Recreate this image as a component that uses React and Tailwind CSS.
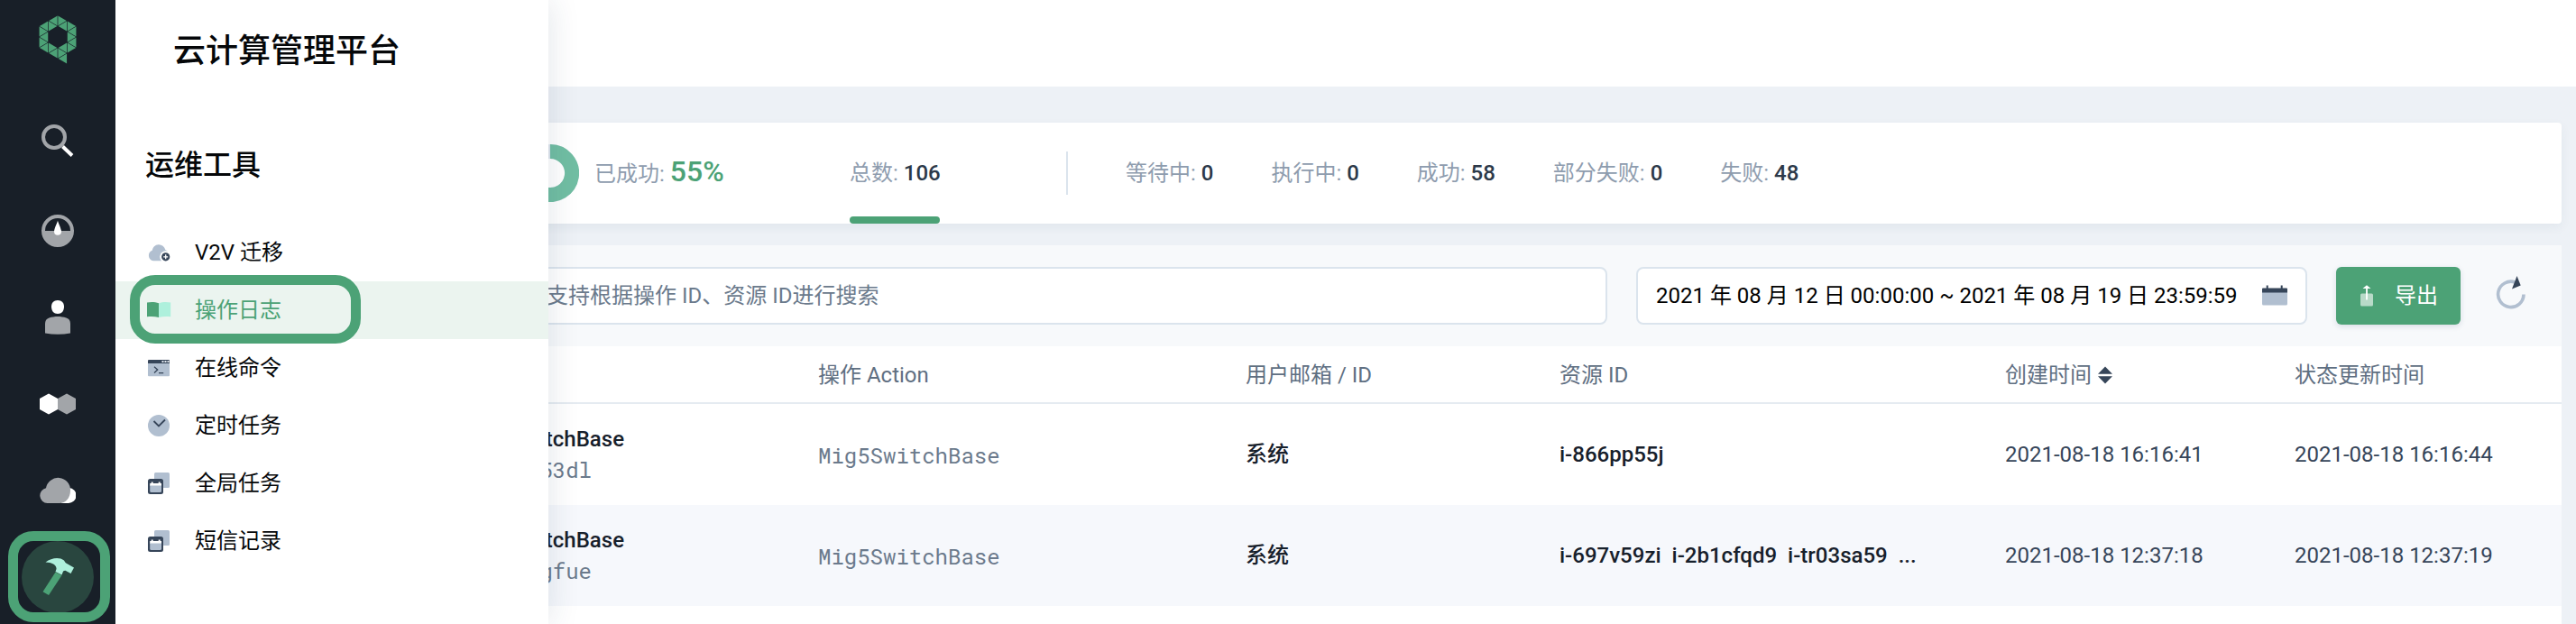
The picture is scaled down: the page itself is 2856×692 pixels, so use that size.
const LOGO_TRIANGLES = (() => {
  const tris = [];
  const w = 10.4;
  const left = [
    [[-2, -12], [-1, -18], [-1, -6]],
    [[-2, -12], [-2, 0], [-1, -6]],
    [[-2, 0], [-1, -6], [-1, 6]],
    [[-2, 0], [-2, 12], [-1, 6]],
    [[-2, 12], [-1, 6], [-1, 18]],
    [[-1, -18], [-1, -6], [0, -12]],
    [[-1, -18], [0, -24], [0, -12]],
    [[-1, 18], [-1, 6], [0, 12]],
    [[-1, 18], [0, 24], [0, 12]],
  ];
  const all = [...left, ...left.map((t) => t.map(([x, y]) => [-x, y])), [[0, 24], [1, 18], [1, 30]]];
  for (const t of all) {
    const pts = t.map(([x, y]) => [x * w + 22, y + 25]);
    const cx = (pts[0][0] + pts[1][0] + pts[2][0]) / 3;
    const cy = (pts[0][1] + pts[1][1] + pts[2][1]) / 3;
    tris.push(pts.map(([x, y]) => `${(cx + (x - cx) * 0.9).toFixed(2)},${(cy + (y - cy) * 0.9).toFixed(2)}`).join(" "));
  }
  return tris;
})();

function Logo() {
  return (
    <svg width="44" height="56" viewBox="0 0 44 56" fill="#4ca276">
      {LOGO_TRIANGLES.map((p) => (
        <polygon key={p} points={p} />
      ))}
    </svg>
  );
}

function SearchIcon() {
  return (
    <svg width="40" height="40" viewBox="0 0 40 40" fill="none">
      <circle cx="16" cy="16" r="12" stroke="#a2a5a9" strokeWidth="4" />
      <path d="M25.5 26.5 36 36.5" stroke="#fff" strokeWidth="4" />
    </svg>
  );
}

function GaugeIcon() {
  return (
    <svg width="40" height="40" viewBox="0 0 40 40" fill="none">
      <circle cx="20" cy="20" r="16" stroke="#a2a5a9" strokeWidth="4" />
      <path d="M4 20h32a16 16 0 0 1-32 0z" fill="#a2a5a9" />
      <path d="M20 8.500c.6 3 4 9 4 12.300a4 4 0 0 1-8 0C16 17.500 19.400 11.500 20 8.500z" fill="#fff" />
    </svg>
  );
}

function UserIcon() {
  return (
    <svg width="40" height="40" viewBox="0 0 40 40" fill="none">
      <path d="M20 1c4.500 0 7.200 3 7 7.500C26.800 13 24.500 16 20 16s-6.800-3-7-7.500C12.800 4 15.500 1 20 1z" fill="#fff" />
      <path d="M6 37.500V27c0-3.500 1.500-5.500 4.500-6.500 6-2 13-2 19 0 3 1 4.500 3 4.500 6.500v10.500c-9 1.700-19 1.700-28 0z" fill="#a2a5a9" />
    </svg>
  );
}

function HexIcon() {
  return (
    <svg width="40" height="40" viewBox="0 0 40 40">
      <path d="M10 8.500 20 14v12l-10 5.500L0 26V14z" fill="#fff" />
      <path d="M30 8.500 40 14v12l-10 5.500L20 26V14z" fill="#a2a5a9" />
    </svg>
  );
}

function CloudIcon() {
  return (
    <svg width="40" height="40" viewBox="0 0 40 40">
      <path d="M24 34V17h8.500a8.500 8.500 0 0 1-1 17z" fill="#fff" />
      <path d="M8.500 34A8.500 8.500 0 0 1 7 17.200 13.600 13.600 0 0 1 34 20c0 8-5 14-12 14z" fill="#a2a5a9" />
    </svg>
  );
}

function HammerIcon() {
  return (
    <svg width="40" height="44" viewBox="0 0 40 44">
      <path d="m17.500 16.500 7 3.500L10 42l-6.500-3.700z" fill="#4ca276" />
      <path d="M6.500 5.500C13 .5 22-.5 27 3.500c1 2 2 3 4 4L38 11.500l-3.500 6.500-5.500-3c-2-.5-3 .5-3.500 2l-1 2.500-7-3.500 1-3C19 9 14 5.500 6.500 5.500z" fill="#aef0dc" />
    </svg>
  );
}

function CloudPlusIcon() {
  return (
    <svg width="28" height="28" viewBox="0 0 28 28">
      <path d="M8 23.300a6 6 0 0 1-1.300-11.500A7.400 7.400 0 0 1 21.300 11a6.300 6.300 0 0 1 3.700 6v6.300z" fill="#b1bfd0" />
      <circle cx="21.700" cy="18.800" r="6.500" fill="#fff" />
      <circle cx="21.700" cy="18.800" r="4.600" fill="#364559" />
      <path d="M21.700 16.300v5M19.200 18.800h5" stroke="#fff" strokeWidth="1.300" />
    </svg>
  );
}

function BookIcon() {
  return (
    <svg width="28" height="28" viewBox="0 0 28 28">
      <path d="M1 5.500c4-1 9-.8 13 .7V22c-4-1.200-9-1.400-13-.7z" fill="#4ca276" />
      <path d="M14 6.200c4-1.500 9-1.700 13.200-.7v15.800c-4.200-.7-9.200-.5-13.200.7z" fill="#aef0dc" />
    </svg>
  );
}

function TerminalIcon() {
  return (
    <svg width="28" height="28" viewBox="0 0 28 28" fill="none">
      <path d="M2 8h24v14.200a1 1 0 0 1-1 1H3a1 1 0 0 1-1-1z" fill="#b1bfd0" />
      <path d="M3 5h22a1 1 0 0 1 1 1v3H2V6a1 1 0 0 1 1-1z" fill="#364559" />
      <path d="M17.500 7h2M20.500 7h2M23.500 7h2" stroke="#dfe6ee" strokeWidth="2" />
      <path d="m9 12.700 3.700 3.300L9 19.500M14 19.700h5.200" stroke="#364559" strokeWidth="1.300" />
    </svg>
  );
}

function ClockIcon() {
  return (
    <svg width="28" height="28" viewBox="0 0 28 28" fill="none">
      <circle cx="14" cy="14" r="12" fill="#b1bfd0" />
      <path d="m8.500 9 5.500 5.500L21 7.500" stroke="#364559" strokeWidth="1.800" />
    </svg>
  );
}

function TaskStackIcon() {
  return (
    <svg width="28" height="28" viewBox="0 0 28 28">
      <rect x="9" y="2" width="17" height="17" rx="1.500" fill="#b1bfd0" />
      <rect x="2" y="9" width="17" height="17" rx="2.500" fill="#364559" />
      <path d="M4.200 14h1.500v-1.500h2V14h6v-1.500h2V14h1.300v3H4.200z" fill="#fff" />
      <path d="M4.200 16.500H17v6a1.500 1.500 0 0 1-1.500 1.500h-9.800a1.500 1.500 0 0 1-1.500-1.500z" fill="#b1bfd0" />
    </svg>
  );
}

function CalendarIcon() {
  return (
    <svg width="28" height="24" viewBox="0 0 28 24">
      <path d="M0 8h28v13a1.500 1.500 0 0 1-1.500 1.500h-25A1.500 1.500 0 0 1 0 21z" fill="#b1bfd0" />
      <path d="M4.700.500h2v3h14v-3h2v3H27a1 1 0 0 1 1 1v4H0v-4a1 1 0 0 1 1-1h3.700z" fill="#364559" />
    </svg>
  );
}

function ExportIcon() {
  return (
    <svg width="14" height="24" viewBox="0 0 14 24" fill="none">
      <rect x="0" y="9.500" width="14" height="14" rx="1.500" fill="#b8dac8" />
      <path d="M6.100 16.500V4H2.500L7 .3 11.500 4H7.900v12.500z" fill="#fff" />
    </svg>
  );
}

function RefreshIcon() {
  return (
    <svg width="36" height="40" viewBox="0 0 36 40" fill="none">
      <path d="M22.500 8A14.200 14.200 0 1 0 32 21.500" stroke="#b1bfd0" strokeWidth="3.600" />
      <path d="m24.500 1 4.200 10.500L19 15.500z" fill="#364559" />
    </svg>
  );
}

const RAIL_ICONS = [
  { name: "search", Icon: SearchIcon, cls: "mt-16 h-[40px]" },
  { name: "gauge", Icon: GaugeIcon, cls: "mt-[60px] h-[40px]" },
  { name: "user", Icon: UserIcon, cls: "mt-[56px] h-[40px]" },
  { name: "hex", Icon: HexIcon, cls: "mt-[56px] h-[40px]" },
  { name: "cloud", Icon: CloudIcon, cls: "mt-[56px] h-[40px]" },
];

function Rail() {
  return (
    <nav className="relative z-20 flex h-full w-32 shrink-0 flex-col items-center bg-[#181f28] pt-4">
      <Logo />
      {RAIL_ICONS.map(({ name, Icon, cls }) => (
        <div key={name} className={cls}>
          <Icon />
        </div>
      ))}
      <div className="mt-9 flex size-20 shrink-0 items-center justify-center rounded-full bg-[#29463f]">
        <HammerIcon />
      </div>
      <div className="absolute top-[589px] left-[9px] h-[101px] w-[113px] rounded-[28px] border-[11px] border-[#4ca276]" />
    </nav>
  );
}

const MENU = [
  { label: "V2V 迁移", Icon: CloudPlusIcon },
  { label: "操作日志", Icon: BookIcon, active: true },
  { label: "在线命令", Icon: TerminalIcon },
  { label: "定时任务", Icon: ClockIcon },
  { label: "全局任务", Icon: TaskStackIcon },
  { label: "短信记录", Icon: TaskStackIcon },
];

function Drawer() {
  return (
    <aside className="relative z-10 h-full w-[480px] shrink-0 bg-white text-[#050709] shadow-[2px_0_32px_rgba(30,60,90,0.12)]">
      <h1 className="pt-8 pl-16 text-[36px] leading-[50px] font-medium">云计算管理平台</h1>
      <h2 className="mt-[77px] pl-[33px] text-[32px] leading-[48px] font-medium">运维工具</h2>
      <ul className="mt-[41px]">
        {MENU.map(({ label, Icon, active }) => (
          <li
            key={label}
            className={
              active
                ? "relative flex h-16 items-center gap-[26px] bg-[#ebf4ef] pl-[34px] text-[#4ca276]"
                : "flex h-16 items-center gap-[26px] pl-[34px]"
            }
          >
            <Icon />
            <span className="text-2xl">{label}</span>
            {active && (
              <div className="absolute -top-[7px] left-4 h-[76px] w-64 rounded-[28px] border-[11px] border-[#4ca276]" />
            )}
          </li>
        ))}
      </ul>
    </aside>
  );
}

const STATS = [
  ["等待中", 0],
  ["执行中", 0],
  ["成功", 58],
  ["部分失败", 0],
  ["失败", 48],
];

function Stat({ label, value }) {
  return (
    <div className="whitespace-nowrap">
      <span className="text-[#8e9cae]">{label}: </span>
      <span className="font-medium text-[#2c3949]">{value}</span>
    </div>
  );
}

function Summary() {
  return (
    <section className="mt-10 mr-4 flex h-28 items-center rounded-r-[4px] bg-white pl-[450px] text-2xl shadow-[0_4px_12px_rgba(40,60,90,0.06)]">
      <svg width="64" height="64" viewBox="0 0 64 64" fill="none" className="shrink-0">
        <circle cx="32" cy="32" r="24" stroke="#dfe6ee" strokeWidth="16" />
        <path d="M32 8a24 24 0 1 1-7.400 46.800" stroke="#71bea3" strokeWidth="16" />
      </svg>
      <div className="ml-[17px] w-[283px] pb-px whitespace-nowrap">
        <span className="text-[#8e9cae]">已成功: </span>
        <span className="text-[32px] leading-none font-medium text-[#4ca276]">55%</span>
      </div>
      <div className="relative flex h-full w-[100px] items-center">
        <Stat label="总数" value={106} />
        <div className="absolute bottom-0 left-0 h-2 w-[100px] rounded-[4px] bg-[#4ca276]" />
      </div>
      <div className="mr-16 ml-[140px] h-12 w-0.5 bg-[#dbe4ed]" />
      <div className="flex gap-16">
        {STATS.map(([l, v]) => (
          <Stat key={l} label={l} value={v} />
        ))}
      </div>
    </section>
  );
}

function Toolbar() {
  return (
    <div className="flex h-28 items-center bg-[#f7f9fb] text-2xl">
      <div className="ml-8 flex h-16 w-[1622px] shrink-0 items-center rounded-lg border-2 border-[#dbe4ed] bg-white pl-[444px] text-[#6b7a8c]">
        支持根据操作 ID、资源 ID进行搜索
      </div>
      <div className="ml-8 flex h-16 w-[744px] shrink-0 items-center justify-between rounded-lg border-2 border-[#dbe4ed] bg-white pr-5 pl-5 whitespace-nowrap text-black">
        <span>2021 年 08 月 12 日 00:00:00 ~ 2021 年 08 月 19 日 23:59:59</span>
        <CalendarIcon />
      </div>
      <button className="ml-8 flex h-16 w-[138px] shrink-0 items-center gap-6 rounded-[6px] bg-[#4ca276] pl-[27px] text-white shadow-[0_2px_6px_rgba(30,60,90,0.14)]">
        <ExportIcon />
        <span>导出</span>
      </button>
      <div className="ml-[38px] pb-[6px]">
        <RefreshIcon />
      </div>
    </div>
  );
}

const GRID = "grid grid-cols-[779px_474px_348px_494px_321px_296px] items-center";

const ROWS = [
  { name: "Mig5SwitchBase", id: "53dl", action: "Mig5SwitchBase", res: ["i-866pp55j"], c: "2021-08-18 16:16:41", u: "2021-08-18 16:16:44" },
  {
    name: "Mig5SwitchBase",
    id: "gfue",
    action: "Mig5SwitchBase",
    res: ["i-697v59zi", "i-2b1cfqd9", "i-tr03sa59", "..."],
    c: "2021-08-18 12:37:18",
    u: "2021-08-18 12:37:19",
    striped: true,
  },
];

const MONO = "font-['Roboto_Mono','DejaVu_Sans_Mono',monospace]";

function LogTable() {
  return (
    <div className="flex-1 bg-white text-2xl">
      <div className={`${GRID} h-16 border-b-2 border-[#e5ebf1] pt-0.5 text-[#5f6f82]`}>
        <span />
        <span>操作 Action</span>
        <span>用户邮箱 / ID</span>
        <span>资源 ID</span>
        <span className="flex items-center gap-[7px]">
          创建时间
          <svg width="16" height="20" viewBox="0 0 16 20" fill="#364559">
            <path d="M8 .5 16 8.700H0zM8 19.500l8-8.200H0z" />
          </svg>
        </span>
        <span>状态更新时间</span>
      </div>
      {ROWS.map((r) => (
        <div key={r.id} className={`${GRID} h-28 ${r.striped ? "bg-[#f6f8fc]" : "bg-white"}`}>
          <div className="leading-[34px]">
            <div className="w-[564px] text-right font-medium text-[#17202b]">{r.name}</div>
            <div className={`w-[528px] text-right text-[#6b7a8c] ${MONO}`}>{r.id}</div>
          </div>
          <span className={`pt-0.5 text-[#6b7a8c] ${MONO}`}>{r.action}</span>
          <span className="font-medium text-[#17202b]">系统</span>
          <span className="flex gap-3 font-medium text-[#17202b]">
            {r.res.map((x) => (
              <span key={x}>{x}</span>
            ))}
          </span>
          <span className="text-[#364559]">{r.c}</span>
          <span className="text-[#364559]">{r.u}</span>
        </div>
      ))}
    </div>
  );
}

export default function App() {
  return (
    <div className="grid h-[692px] w-[2856px] grid-cols-[128px_2728px] overflow-hidden bg-[#edf1f6] font-['Roboto','Noto_Sans_CJK_SC',sans-serif]">
      <div className="col-start-1 row-start-1 flex h-[692px] w-[608px]">
        <Rail />
        <Drawer />
      </div>
      <main className="col-start-2 row-start-1 flex h-[692px] flex-col">
        <header className="h-24 shrink-0 bg-white" />
        <Summary />
        <div className="mt-6 mr-4 flex flex-1 flex-col">
          <Toolbar />
          <LogTable />
        </div>
      </main>
    </div>
  );
}
